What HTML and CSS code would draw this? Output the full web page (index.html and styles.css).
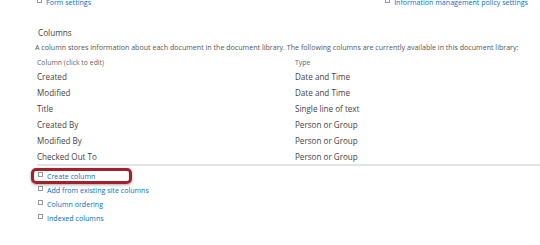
FILE: index.html
```html
<!DOCTYPE html>
<html lang="en">
<head>
    <meta charset="UTF-8">
    <title>Document Library Settings</title>
    <link rel="stylesheet" href="styles.css">
</head>
<body>
    <div class="top-links">
        <ul class="links">
            <li><a href="#">Form settings</a></li>
        </ul>
        <ul class="links">
            <li><a href="#">Information management policy settings</a></li>
        </ul>
    </div>

    <div class="section">
        <h3 class="title">Columns</h3>
        <p class="desc">A column stores information about each document in the document library. The following columns are currently available in this document library:</p>

        <table class="columns">
            <tr class="head"><td>Column (click to edit)</td><td>Type</td></tr>
            <tr><td>Created</td><td>Date and Time</td></tr>
            <tr><td>Modified</td><td>Date and Time</td></tr>
            <tr><td>Title</td><td>Single line of text</td></tr>
            <tr><td>Created By</td><td>Person or Group</td></tr>
            <tr><td>Modified By</td><td>Person or Group</td></tr>
            <tr><td>Checked Out To</td><td>Person or Group</td></tr>
        </table>

        <ul class="links actions">
            <li class="marked"><a href="#">Create column</a></li>
            <li><a href="#">Add from existing site columns</a></li>
            <li><a href="#">Column ordering</a></li>
            <li><a href="#">Indexed columns</a></li>
        </ul>
    </div>
</body>
</html>
```

FILE: styles.css
```css
body {
    margin: 0;
    background: #fff;
    font-family: "Open Sans", "Noto Sans", sans-serif;
    font-size: 7.1px;
    color: #444;
    overflow: hidden;
}
a {
    color: #0072c6;
    text-decoration: none;
    white-space: nowrap;
}
.top-links {
    display: flex;
    justify-content: space-between;
    margin-top: -5px;
    padding: 0 12px 0 37px;
    height: 14px;
}
.links {
    list-style: none;
    margin: 0;
    padding: 0;
}
.links li {
    display: flex;
    align-items: center;
    height: 14px;
}
.links li::before {
    content: "";
    flex: none;
    width: 3px;
    height: 3px;
    border: 1px solid #999;
    margin-right: 4px;
    margin-top: -3px;
}
.section {
    padding-left: 35px;
    padding-top: 18px;
}
.title {
    margin: 0 0 0 3px;
    font-size: 8.2px;
    font-weight: normal;
    color: #444;
    height: 15px;
}
.desc {
    margin: 0;
    height: 14px;
    color: #555;
    white-space: nowrap;
}
.columns {
    border-collapse: collapse;
    width: 505px;
    border-bottom: 2px solid #e3e3e3;
    margin-left: 2px;
}
.columns td {
    padding: 0;
    height: 16px;
    font-size: 8.1px;
    vertical-align: middle;
}
.columns td:first-child {
    width: 258px;
}
.columns .head td {
    height: 12px;
    font-size: 6.9px;
    color: #666;
}
.actions {
    margin: 3px 0 0 3px;
}
.actions li {
    height: 14px;
}
.marked {
    position: relative;
}
.marked::after {
    content: "";
    position: absolute;
    left: -7px;
    top: -1px;
    width: 95px;
    height: 10px;
    border: 3px solid #a3212b;
    border-radius: 5px;
    box-shadow: 0 1px 3px rgba(0, 0, 0, 0.35);
}
```
